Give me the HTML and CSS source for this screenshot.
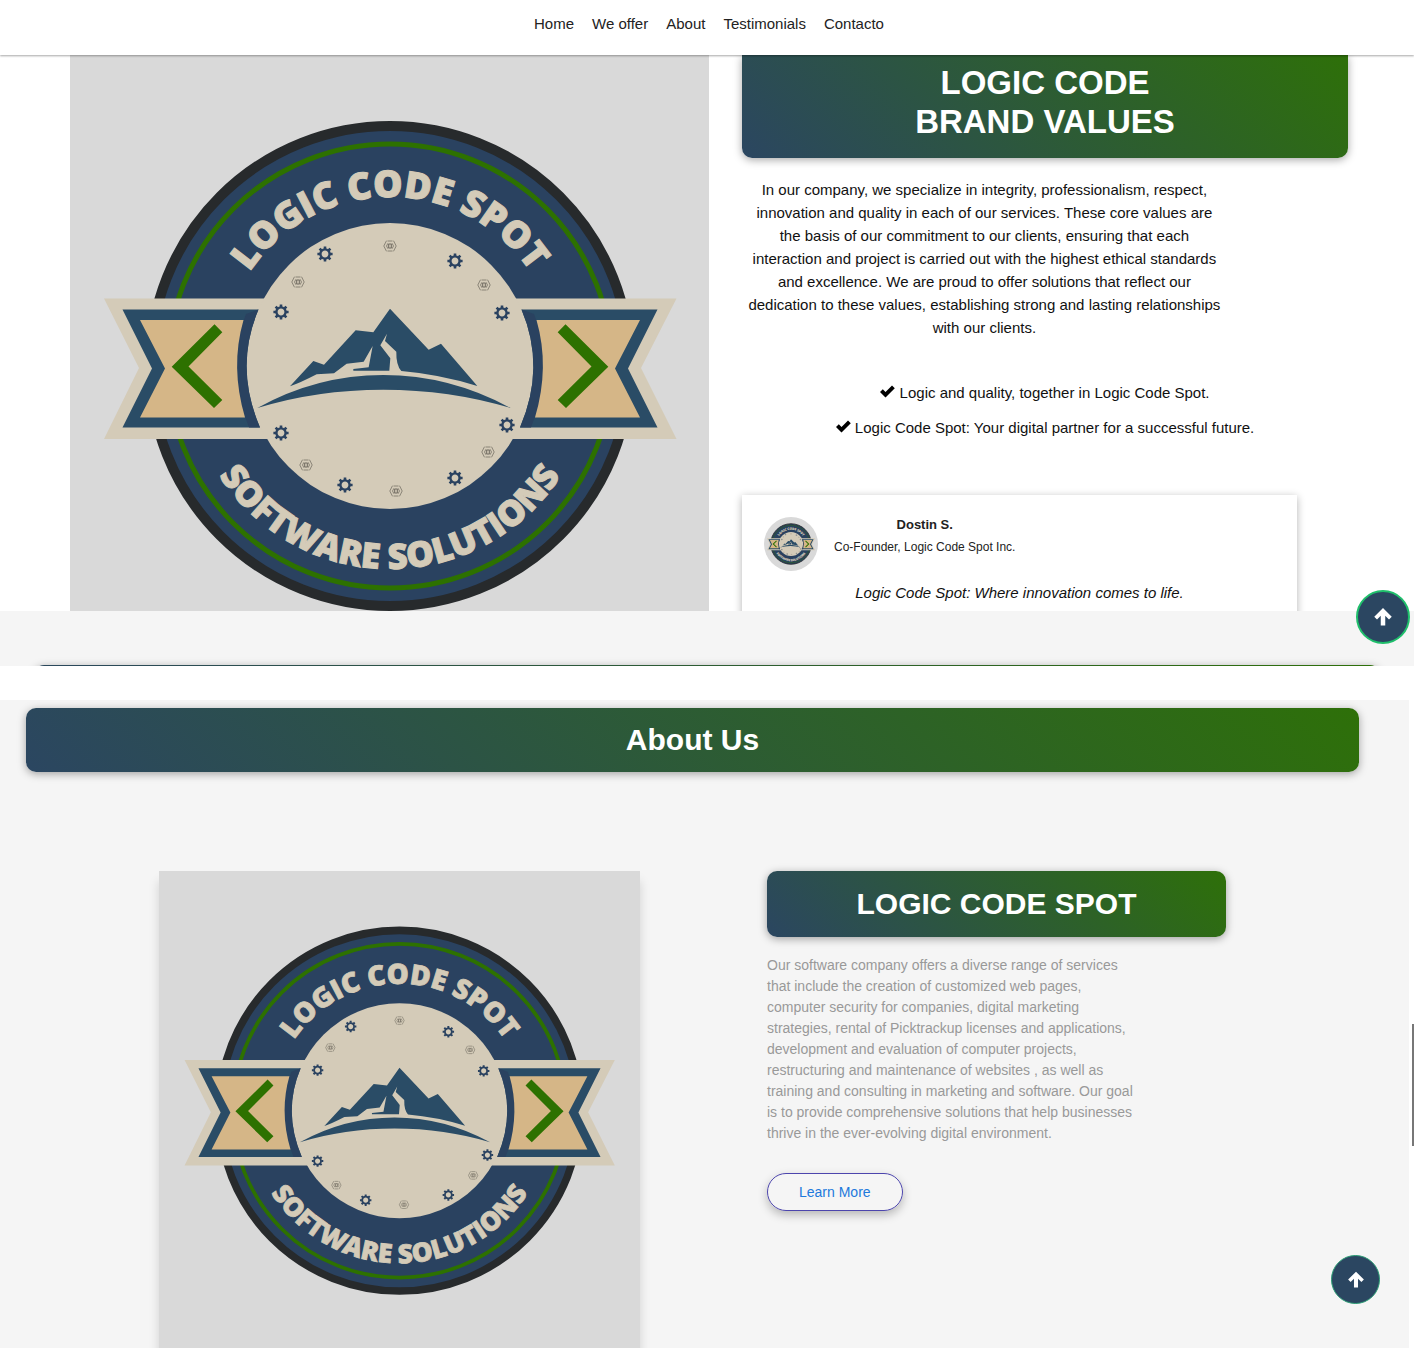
FILE: index.html
```html
<!DOCTYPE html>
<html lang="en">
<head>
<meta charset="utf-8">
<meta name="viewport" content="width=device-width, initial-scale=1">
<title>Logic Code Spot</title>
<link rel="stylesheet" href="styles.css">
</head>
<body>
<svg class="sprite" aria-hidden="true">
  <defs>
    <path id="arc-top" d="M221 366a169 169 0 0 1 338 0"/>
    <path id="arc-bottom" d="M187 366a203 203 0 0 0 406 0"/>
    <g id="gear" fill="none" stroke="#2a4260">
      <circle r="4.6" stroke-width="2.4"/>
      <path stroke-width="2.6" d="M0-5v-2.6M0 5v2.6M-5 0h-2.6M5 0h2.6M-3.500-3.500l-1.900-1.900M3.500-3.500l1.900-1.900M-3.500 3.500l-1.900 1.900M3.500 3.500l1.900 1.900"/>
    </g>
    <g id="nut" fill="none" stroke="#8a8477" stroke-width="1">
      <path d="M-3.500-5.300l-2.700 5.300l2.700 5.300M3.500-5.300l2.700 5.300l-2.700 5.300M-2.500-5h5M-2.500 5h5"/>
      <path d="M-2-2.800l-1.500 2.800l1.500 2.800M2-2.800l1.500 2.800l-1.500 2.800"/>
      <path stroke="#6d685e" d="M-1.300-2h2.600v4h-2.600z"/>
    </g>
    <g id="ribbon-end">
      <path fill="#2a4c66" d="M122.500 309.500H258.500Q234 367 260 427.500H122.500L152 368.500z"/>
      <path fill="#2a4260" d="M246 314L258.500 309.500Q234 367 260 427.500L249 427.500Q224 367 246 314z"/>
      <path fill="#d5b687" d="M140 320H243.500Q230 367 245 417.500H140L165 368.500z"/>
      <path fill="#2d7100" d="M214.500 324.300L222.300 332.300L188.500 366.500L222.300 400L214 408L171.700 366.700z"/>
    </g>
    <g id="badge">
      <circle cx="390" cy="366" r="240" fill="#2a4260" stroke="#272a2c" stroke-width="10"/>
      <circle cx="390" cy="366" r="222" fill="none" stroke="#2d7100" stroke-width="5"/>
      <path fill="#d4cbb8" d="M104 298.500H676.500L641 368L676.500 439H104L139 368z"/>
      <circle cx="390" cy="366" r="143" fill="#d4cbb8"/>
      <use href="#ribbon-end"/>
      <use href="#ribbon-end" transform="matrix(-1 0 0 1 780 0)"/>
      <g transform="translate(250 295) scale(.3333)" fill="#2a4c66">
        <path d="M120 274L190 198L222 209L317 106L370 112L420 41L536 164L573 146L682 273Q570 238 454 228Q438 210 439 170L405 138L411 116L391 151L421 190L418 227H310V222L356 217L368 153L341 200L290 206L252 235L200 238Q150 264 120 274z"/>
        <path d="M22 339Q200 240 400 240Q600 240 782 339Q600 284 400 284Q200 284 22 339z"/>
      </g>
      <use href="#gear" x="325" y="254"/><use href="#gear" x="455" y="261"/>
      <use href="#gear" x="281" y="312"/><use href="#gear" x="502" y="313"/>
      <use href="#gear" x="281" y="433"/><use href="#gear" x="507" y="425"/>
      <use href="#gear" x="345" y="485"/><use href="#gear" x="455" y="478"/>
      <use href="#nut" x="390" y="246"/><use href="#nut" x="298" y="282"/>
      <use href="#nut" x="484" y="285"/><use href="#nut" x="306" y="465"/>
      <use href="#nut" x="396" y="491"/><use href="#nut" x="488" y="452"/>
      <g class="badge-text">
        <text font-size="37"><textPath href="#arc-top" startOffset="50%">LOGIC CODE SPOT</textPath></text>
        <text font-size="35"><textPath href="#arc-bottom" startOffset="50%">SOFTWARE SOLUTIONS</textPath></text>
      </g>
    </g>
    <path id="arrow" d="M8 1.500L15 8.500L12.800 10.700L9.800 7.700V15.500H6.200V7.700L3.200 10.700L1 8.500z"/>
    <path id="check" d="M0 7L2.800 4.200L5.500 7L12 .5L14.800 3.300L5.500 12.500z"/>
  </defs>
</svg>

<header class="site-header">
  <nav class="nav">
    <a href="#home">Home</a>
    <a href="#offer">We offer</a>
    <a href="#about">About</a>
    <a href="#testimonials">Testimonials</a>
    <a href="#contacto">Contacto</a>
  </nav>
</header>

<main>
  <div class="screen">
    <section class="hero" id="home">
      <svg class="hero-logo" viewBox="70 55 639 556" role="img" aria-label="Logic Code Spot Software Solutions"><use href="#badge"/></svg>
      <div class="values">
        <h1 class="banner banner-values">LOGIC CODE<br>BRAND VALUES</h1>
        <p class="values-text">In our company, we specialize in integrity, professionalism, respect, innovation and quality in each of our services. These core values are the basis of our commitment to our clients, ensuring that each interaction and project is carried out with the highest ethical standards and excellence. We are proud to offer solutions that reflect our dedication to these values, establishing strong and lasting relationships with our clients.</p>
        <ul class="points">
          <li><svg class="check" viewBox="0 0 15 13" aria-hidden="true"><use href="#check"/></svg> Logic and quality, together in Logic Code Spot.</li>
          <li><svg class="check" viewBox="0 0 15 13" aria-hidden="true"><use href="#check"/></svg> Logic Code Spot: Your digital partner for a successful future.</li>
        </ul>
        <article class="quote-card">
          <div class="person">
            <svg class="avatar" viewBox="70 46 640 640" aria-hidden="true"><use href="#badge"/></svg>
            <div class="person-text">
              <h2>Dostin S.</h2>
              <p>Co-Founder, Logic Code Spot Inc.</p>
            </div>
          </div>
          <blockquote>Logic Code Spot: Where innovation comes to life.</blockquote>
        </article>
      </div>
    </section>
    <div class="next-section"><div class="banner next-banner"></div></div>
    <button class="to-top to-top-hero" type="button" aria-label="Back to top"><svg viewBox="0 0 16 17"><use href="#arrow"/></svg></button>
  </div>

  <div class="screen">
    <section class="about" id="about">
      <h2 class="banner banner-about">About Us</h2>
      <div class="about-grid">
        <svg class="about-logo" viewBox="70 47 640 635" role="img" aria-label="Logic Code Spot Software Solutions"><use href="#badge"/></svg>
        <div class="about-copy">
          <h3 class="banner banner-name">LOGIC CODE SPOT</h3>
          <p class="about-text">Our software company offers a diverse range of services that include the creation of customized web pages, computer security for companies, digital marketing strategies, rental of Picktrackup licenses and applications, development and evaluation of computer projects, restructuring and maintenance of websites , as well as training and consulting in marketing and software. Our goal is to provide comprehensive solutions that help businesses thrive in the ever-evolving digital environment.</p>
          <a class="learn-more" href="#offer">Learn More</a>
        </div>
      </div>
    </section>
    <div class="scroll-thumb"></div>
    <button class="to-top to-top-about" type="button" aria-label="Back to top"><svg viewBox="0 0 16 17"><use href="#arrow"/></svg></button>
  </div>
</main>
</body>
</html>
```
FILE: styles.css
```css
* {
  box-sizing: border-box;
}

body {
  margin: 0;
  background: #fff;
  color: #111;
  font: 15px/23px "Liberation Sans", Arial, sans-serif;
}

h1, h2, h3, p, ul, blockquote {
  margin: 0;
  padding: 0;
}

.sprite {
  position: absolute;
  width: 0;
  height: 0;
}

.badge-text {
  fill: #d4cbb8;
  stroke: #d4cbb8;
  stroke-width: 1px;
  font-family: "Open Sans", "Noto Sans", sans-serif;
  font-weight: 800;
  text-anchor: middle;
}

.site-header {
  position: relative;
  z-index: 2;
  height: 55px;
  padding: 12px 0 0 4px;
  background: #fff;
  box-shadow: 0 1px 2px rgba(0, 0, 0, .35);
}

.nav {
  display: flex;
  justify-content: center;
  gap: 18px;
}

.nav a {
  color: #222;
  text-decoration: none;
}

.screen {
  position: relative;
}

.banner {
  border-radius: 10px;
  background: linear-gradient(45deg, #2b4661, #2e7009);
  box-shadow: 0 2px 8px rgba(0, 0, 0, .35);
  color: #fff;
  font-weight: 700;
  text-align: center;
}

/* Brand values */
.hero {
  display: grid;
  grid-template-columns: 639fr 606fr;
  gap: 33px;
  padding: 0 66px 0 70px;
  overflow: hidden;
}

.hero-logo {
  display: block;
  width: 100%;
  background: #d9d9d9;
}

.values {
  height: 0;
}

.banner-values {
  padding: 8px 16px 17px;
  border-radius: 0 0 10px 10px;
  font-size: 33px;
  line-height: 39px;
}

.values-text {
  width: 80%;
  margin-top: 20px;
  padding: 0 4px;
  text-align: center;
}

.points {
  display: grid;
  gap: 12px;
  margin-top: 42px;
  list-style: none;
  text-align: center;
}

.check {
  width: 15px;
  height: 13px;
}

.quote-card {
  width: 555px;
  max-width: 100%;
  margin-top: 56px;
  padding: 22px;
  background: #fff;
  box-shadow: 0 2px 8px rgba(0, 0, 0, .3);
}

.person {
  display: flex;
  gap: 16px;
}

.avatar {
  width: 54px;
  height: 54px;
  border-radius: 50%;
  background: #d9d9d9;
}

.person-text {
  color: #222;
  font-size: 12px;
  line-height: 23px;
  text-align: center;
}

.person-text h2 {
  margin-top: -4px;
  font-size: 13px;
}

.quote-card blockquote {
  margin-top: 10px;
  font-style: italic;
  text-align: center;
}

.next-section {
  height: 55px;
  padding: 54px 34px 0;
  overflow: hidden;
  background: #f5f5f5;
}

.next-banner {
  height: 64px;
}

/* About */
.about {
  margin: 34px 5px 17px 0;
  padding: 8px 50px 0 26px;
  overflow: hidden;
  background: #f5f5f5;
}

.banner-about {
  font-size: 30px;
  line-height: 64px;
}

.about-grid {
  display: grid;
  grid-template-columns: 481fr 459fr;
  gap: 127px;
  padding: 99px 133px 0;
}

.about-logo {
  display: block;
  width: 100%;
  background: #d9d9d9;
  box-shadow: 0 10px 10px rgba(0, 0, 0, .15);
}

.banner-name {
  font-size: 30px;
  line-height: 66px;
}

.about-text {
  max-width: 368px;
  margin-top: 18px;
  color: #999;
  font-size: 14px;
  line-height: 21px;
}

.learn-more {
  display: inline-block;
  margin-top: 29px;
  padding: 0 31px;
  border: 1px solid #4c45ad;
  border-radius: 20px;
  box-shadow: 0 4px 10px rgba(0, 0, 0, .25);
  color: #2179dc;
  font-size: 14px;
  line-height: 36px;
  text-decoration: none;
}

.to-top {
  position: absolute;
  display: grid;
  place-items: center;
  padding: 0;
  border: 2px solid #1fbf6b;
  border-radius: 50%;
  background: #2b4661;
}

.to-top svg {
  width: 20px;
  fill: #fff;
}

.to-top-hero {
  right: 4px;
  bottom: 22px;
  width: 54px;
  height: 54px;
}

.to-top-about {
  right: 34px;
  bottom: 44px;
  width: 49px;
  height: 49px;
  border: 1px solid #2a9d74;
}

.to-top-about svg {
  width: 18px;
}

.scroll-thumb {
  position: absolute;
  top: 50%;
  right: 0;
  width: 2px;
  height: 122px;
  background: #777;
}
```
